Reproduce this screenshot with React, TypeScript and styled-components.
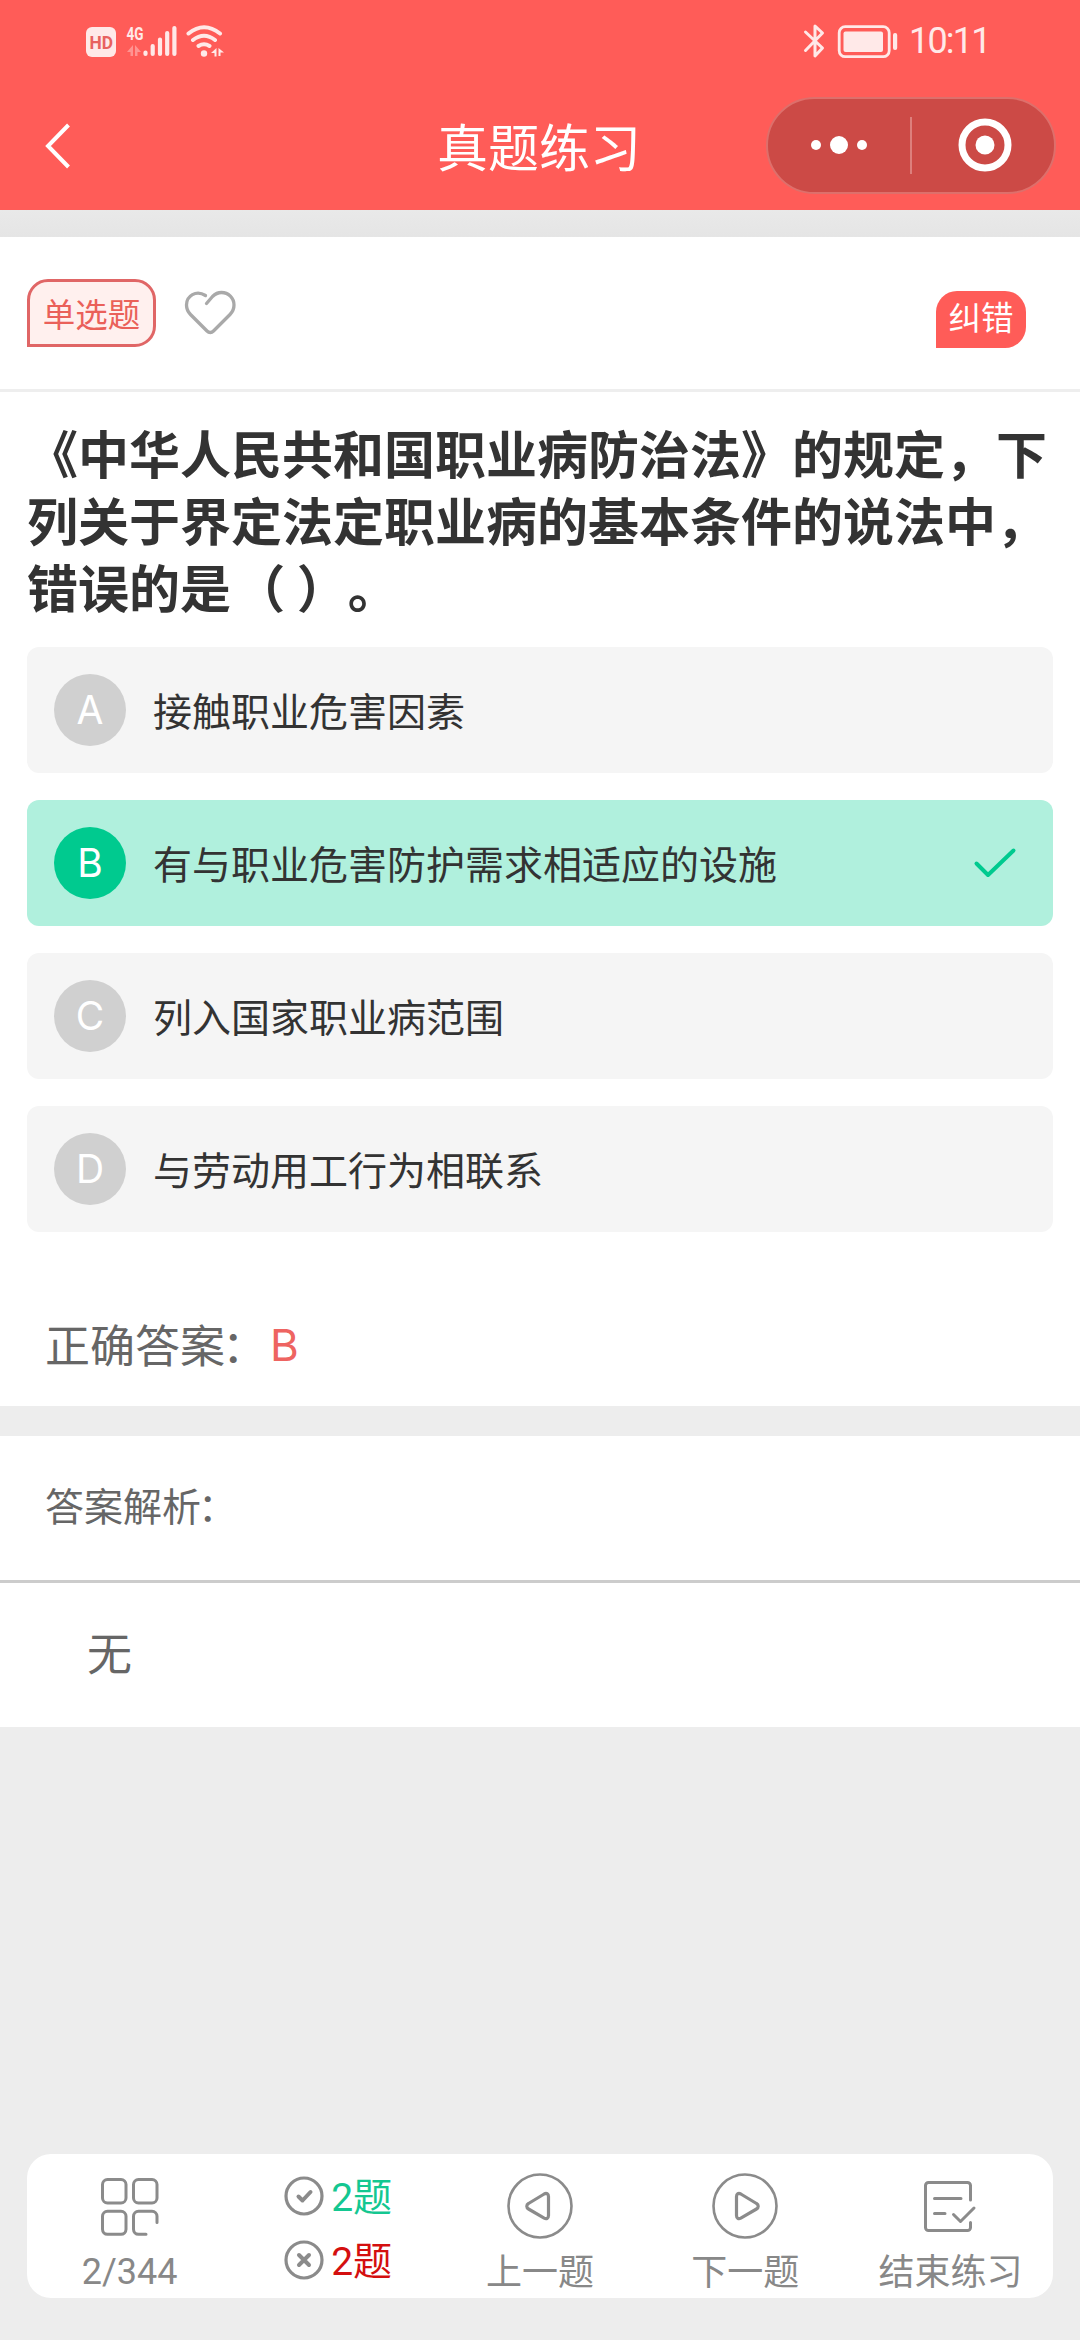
import React from "react";
import styled, { createGlobalStyle } from "styled-components";

const GlobalStyle = createGlobalStyle`
  * { box-sizing: border-box; }
  body {
    margin: 0;
    background: #ededed;
    font-family: "Noto Sans CJK SC", sans-serif;
    text-spacing-trim: space-all;
  }
`;

const Page = styled.div`
  width: 1080px;
  height: 2340px;
  display: flex;
  flex-direction: column;
  background: #ededed;
`;

const Header = styled.header`
  height: 210px;
  flex: none;
  background: #ff5c58;
  color: #fff;
`;

const StatusBar = styled.div`
  height: 82px;
  padding: 0 80px 0 84px;
  display: flex;
  justify-content: space-between;
`;

const StatusSide = styled.div`
  display: flex;
  align-items: center;
`;

const Clock = styled.span`
  width: 91px;
  margin-left: 9px;
  font: 400 36px/84px Roboto, sans-serif;
  letter-spacing: -1.8px;
  white-space: nowrap;
  color: #ffe9e8;
`;

const NavBar = styled.div`
  height: 128px;
  padding: 0 24px 0 42px;
  display: grid;
  grid-template-columns: 300px 1fr 320px;
  align-items: center;
`;

const Title = styled.h1`
  margin: 0;
  font-size: 51px;
  line-height: 72px;
  font-weight: 400;
  text-align: center;
  padding: 0 0 3px 0;
`;

const Capsule = styled.div`
  width: 290px;
  height: 97px;
  justify-self: end;
  margin-top: -2px;
  border-radius: 49px;
  border: 2px solid #de6f6b;
  background: #cc4a46;
  display: flex;
  align-items: center;
`;

const CapsuleHalf = styled.div<{ $shift?: number }>`
  width: 142px;
  flex: none;
  display: flex;
  justify-content: center;
  padding-left: ${(p) => p.$shift ?? 0}px;
`;

const CapsuleLine = styled.div`
  width: 2px;
  height: 57px;
  background: #dd7f7c;
`;

const Strip = styled.div`
  height: 27px;
  flex: none;
  background: linear-gradient(#e9e9e9, #e5e5e5);
`;

const Panel = styled.section<{ $h: number }>`
  height: ${(p) => p.$h}px;
  flex: none;
  background: #fff;
`;

const TagRow = styled.div`
  height: 155px;
  border-bottom: 3px solid #eee;
  padding: 42px 54px 0 27px;
  display: flex;
  align-items: flex-start;
`;

const TypeTag = styled.span`
  width: 129px;
  height: 68px;
  border: 3px solid #e06666;
  border-radius: 21px 21px 21px 0;
  background: #fff0ee;
  color: #ea6059;
  font-size: 32.5px;
  line-height: 61px;
  text-align: center;
`;

const HeartButton = styled.span`
  display: flex;
  margin: 9px auto 0 26px;
`;

const FixTag = styled.span`
  width: 90px;
  height: 57px;
  margin-top: 12px;
  border-radius: 21px 21px 21px 0;
  background: #ff5c58;
  color: #fff;
  font-size: 32.5px;
  line-height: 50px;
  text-align: center;
`;

const Question = styled.h2`
  margin: 0;
  padding: 27px 26px 0 27px;
  height: 255px;
  font-size: 51px;
  line-height: 67px;
  font-weight: 700;
  color: #333;
`;

const Options = styled.div`
  padding: 0 27px;
  display: flex;
  flex-direction: column;
  gap: 27px;
`;

const Option = styled.div<{ $right?: boolean }>`
  height: 126px;
  border-radius: 12px;
  padding: 0 36px 0 27px;
  display: flex;
  align-items: center;
  background: ${(p) => (p.$right ? "#b0f0dd" : "#f5f5f5")};
`;

const Letter = styled.span<{ $right?: boolean }>`
  width: 72px;
  height: 72px;
  border-radius: 50%;
  background: ${(p) => (p.$right ? "#00ca8f" : "#d0d0d0")};
  color: #fff;
  font: 400 39px/71px Inter, sans-serif;
  text-align: center;
`;

const OptionText = styled.span`
  flex: 1;
  margin-left: 27px;
  padding-bottom: 3px;
  font-size: 39px;
  line-height: 58px;
  color: #333;
`;

const Answer = styled.div`
  padding: 80px 45px 0;
  display: flex;
  font-size: 45px;
  line-height: 64px;
  color: #666;
`;

const Colon = styled.span`
  margin: 0 3px 0 -3px;
`;

const AnswerKey = styled.span`
  font: 400 44px/67px Inter, sans-serif;
  color: #ee6461;
`;

const Analysis = styled.div`
  margin-top: 30px;
  background: #fff;
  flex: none;
`;

const AnalysisTitle = styled.div`
  height: 147px;
  padding: 0 45px;
  border-bottom: 3px solid #ccc;
  font-size: 39px;
  line-height: 137px;
  color: #666;
`;

const AnalysisBody = styled.div`
  height: 144px;
  padding: 0 87px;
  font-size: 45px;
  line-height: 138px;
  color: #666;
`;

const BottomBar = styled.nav`
  margin: auto 27px 42px;
  height: 144px;
  flex: none;
  border-radius: 24px;
  background: #fff;
  display: grid;
  grid-template-columns: repeat(5, 1fr);
  color: #888;
`;

const BarItem = styled.div`
  display: flex;
  flex-direction: column;
  align-items: center;
  padding-top: 19px;
`;

const BarLabel = styled.span`
  margin-top: 6px;
  font-size: 36px;
  line-height: 48px;
  white-space: nowrap;
`;

const Progress = styled(BarLabel)`
  margin-top: 9px;
  font-family: Roboto, sans-serif;
`;

const Scores = styled.div`
  display: flex;
  flex-direction: column;
  padding: 10px 0 0 52px;
`;

const Score = styled.div<{ $color: string }>`
  height: 64px;
  display: flex;
  align-items: center;
  gap: 7px;
  font: 400 39px/64px Roboto, "Noto Sans CJK SC", sans-serif;
  color: ${(p) => p.$color};
`;

const ScoreText = styled.span`
  padding-top: 3px;
`;

const LeftStatus = () => (
  <svg width="146" height="40" viewBox="84 20 146 40" fill="#ffe9e8">
    <rect x="86" y="26" width="30" height="30" rx="6" />
    <text x="89.500" y="48" fontFamily="Roboto" fontWeight="700" fontSize="19" fill="#e8625f" textLength="23.500" lengthAdjust="spacingAndGlyphs">HD</text>
    <text x="126.500" y="39" fontFamily="Roboto" fontWeight="700" fontSize="19" textLength="17" lengthAdjust="spacingAndGlyphs">4G</text>
    <path d="M133 44v11h-2.500v-4h-3.500zM135 44l6 7h-3.500v4H135z" opacity=".4" />
    <g stroke="#ffe9e8" strokeWidth="4.200" strokeLinecap="round">
      <path d="M145.500 51.500v1.500M152.700 45v8M160 38.500V53M167.200 32v21M174.400 27v26" />
    </g>
    <g fill="none" stroke="#ffe9e8" strokeWidth="4" strokeLinecap="round">
      <path d="M188.500 32.500q15.500-12.500 31.500 0M193 39q11-8.500 22 0M198.500 45q5.500-3.500 11 0" />
    </g>
    <circle cx="204" cy="52.500" r="3.200" />
    <path d="M216.500 47v8.500h-2v-3.500h-3.500zM218.500 47l5.500 4.500h-3.500v3.500h-2z" />
  </svg>
);

const RightStatus = () => (
  <svg width="98" height="40" viewBox="802 20 98 40" fill="none" stroke="#ffe9e8">
    <path d="M805.500 31l17 16-7.500 8V25l7.500 7-17 17.500" strokeWidth="3" strokeLinejoin="round" strokeLinecap="round" />
    <rect x="839.200" y="25.700" width="50" height="30" rx="6" strokeWidth="2.800" />
    <rect x="843.500" y="30.500" width="39.500" height="20.500" rx="2" fill="#ffe9e8" stroke="none" />
    <rect x="893" y="32" width="4.200" height="17" rx="2" fill="#ffe9e8" stroke="none" />
  </svg>
);

const BackIcon = () => (
  <svg width="32" height="50" viewBox="0 0 32 50" fill="none" stroke="#fff" strokeWidth="4">
    <path d="M26.500 4L6 25l20.500 21" />
  </svg>
);

const MoreIcon = () => (
  <svg width="58" height="20" viewBox="0 0 58 20" fill="#fff">
    <circle cx="6" cy="10" r="5" />
    <circle cx="29" cy="10" r="9" />
    <circle cx="52" cy="10" r="5" />
  </svg>
);

const TargetIcon = () => (
  <svg width="54" height="54" viewBox="0 0 54 54">
    <circle cx="27" cy="27" r="23" fill="none" stroke="#fff" strokeWidth="7" />
    <circle cx="27" cy="27" r="9.500" fill="#fff" />
  </svg>
);

const HeartIcon = () => (
  <svg width="56" height="48" viewBox="182 288 56 48" fill="none" stroke="#a9a9a9" strokeWidth="3.300" strokeLinecap="round" strokeLinejoin="round">
    <path d="M205.500 295.500C196 289.500 186.500 296 186.500 305c0 4 1.500 7 4 9.500L207 331c2 2 4.500 2 6.500 0l16.500-16.500c2.500-2.500 4-5.500 4-9.500 0-7-5.500-12.500-12.500-12.500-3.500 0-6.500 1.500-9 4l-6 7" />
  </svg>
);

const CheckIcon = () => (
  <svg width="44" height="34" viewBox="0 0 44 34" fill="none" stroke="#00ca8f" strokeWidth="4" strokeLinecap="round" strokeLinejoin="round">
    <path d="M3.500 17.500L15 29 40.500 4.500" />
  </svg>
);

const GridIcon = () => (
  <svg width="64" height="66" viewBox="98 2173 64 66" fill="none" stroke="#8b8b8b" strokeWidth="3" strokeLinecap="round">
    <rect x="102.500" y="2179.500" width="23.500" height="23.500" rx="5" />
    <rect x="133.500" y="2179.500" width="23.500" height="23.500" rx="5" />
    <rect x="102.500" y="2211.300" width="23.500" height="23" rx="5" />
    <path d="M157 2222.500v-6.200a5 5 0 0 0-5-5h-13.500a5 5 0 0 0-5 5v13a5 5 0 0 0 5 5h7.500" />
  </svg>
);

const MarkIcon = ({ ok }: { ok?: boolean }) => (
  <svg width="40" height="40" viewBox="0 0 40 40" fill="none" stroke="#8b8b8b" strokeLinecap="round" strokeLinejoin="round">
    <circle cx="20" cy="20" r="18" strokeWidth="3.200" />
    <path d={ok ? "M14.500 20.500l4 4 8-8.500" : "M15 15l10 10M25 15L15 25"} strokeWidth="4" />
  </svg>
);

const StepIcon = ({ back }: { back?: boolean }) => (
  <svg width="66" height="66" viewBox="0 0 66 66" fill="none" stroke="#8b8b8b" strokeLinejoin="round">
    <circle cx="33" cy="33" r="31.500" strokeWidth="2.600" />
    <path
      transform={back ? "translate(66 0) scale(-1 1)" : undefined}
      d="M24.500 23.500v19c0 2.700 2 3.800 4.300 2.600L44.500 36c2.300-1.300 2.300-4.200 0-5.500L28.800 21c-2.300-1.300-4.300-.2-4.300 2.500z"
      strokeWidth="3.200"
    />
  </svg>
);

const FinishIcon = () => (
  <svg width="66" height="66" viewBox="918 2173 66 66" fill="none" stroke="#8b8b8b" strokeWidth="3" strokeLinecap="round" strokeLinejoin="round">
    <path d="M971.500 2200v-14.500a3 3 0 0 0-3-3h-39a3 3 0 0 0-3 3v42a3 3 0 0 0 3 3h39a3 3 0 0 0 3-3v-5M935.500 2198.500h26.500M935.500 2213.500h10.500M954.500 2214.500l7 7 13.500-13.500" />
  </svg>
);

const options = [
  { letter: "A", text: "接触职业危害因素" },
  { letter: "B", text: "有与职业危害防护需求相适应的设施", right: true },
  { letter: "C", text: "列入国家职业病范围" },
  { letter: "D", text: "与劳动用工行为相联系" },
];

export default function App() {
  return (
    <Page>
      <GlobalStyle />
      <Header>
        <StatusBar>
          <StatusSide><LeftStatus /></StatusSide>
          <StatusSide><RightStatus /><Clock>10:11</Clock></StatusSide>
        </StatusBar>
        <NavBar>
          <BackIcon />
          <Title>真题练习</Title>
          <Capsule>
            <CapsuleHalf><MoreIcon /></CapsuleHalf>
            <CapsuleLine />
            <CapsuleHalf $shift={4}><TargetIcon /></CapsuleHalf>
          </Capsule>
        </NavBar>
      </Header>
      <Strip />
      <Panel $h={1169}>
        <TagRow>
          <TypeTag>单选题</TypeTag>
          <HeartButton><HeartIcon /></HeartButton>
          <FixTag>纠错</FixTag>
        </TagRow>
        <Question>
          《中华人民共和国职业病防治法》的规定，下列关于界定法定职业病的基本条件的说法中，错误的是{"\u200A"}（ ）。
        </Question>
        <Options>
          {options.map((o) => (
            <Option key={o.letter} $right={o.right}>
              <Letter $right={o.right}>{o.letter}</Letter>
              <OptionText>{o.text}</OptionText>
              {o.right && <CheckIcon />}
            </Option>
          ))}
        </Options>
        <Answer>正确答案<Colon>：</Colon><AnswerKey>B</AnswerKey></Answer>
      </Panel>
      <Analysis>
        <AnalysisTitle>答案解析<Colon>：</Colon></AnalysisTitle>
        <AnalysisBody>无</AnalysisBody>
      </Analysis>
      <BottomBar>
        <BarItem><GridIcon /><Progress>2/344</Progress></BarItem>
        <Scores>
          <Score $color="#14c791"><MarkIcon ok /><ScoreText>2题</ScoreText></Score>
          <Score $color="#d40f0f"><MarkIcon /><ScoreText>2题</ScoreText></Score>
        </Scores>
        <BarItem><StepIcon back /><BarLabel>上一题</BarLabel></BarItem>
        <BarItem><StepIcon /><BarLabel>下一题</BarLabel></BarItem>
        <BarItem><FinishIcon /><BarLabel>结束练习</BarLabel></BarItem>
      </BottomBar>
    </Page>
  );
}
